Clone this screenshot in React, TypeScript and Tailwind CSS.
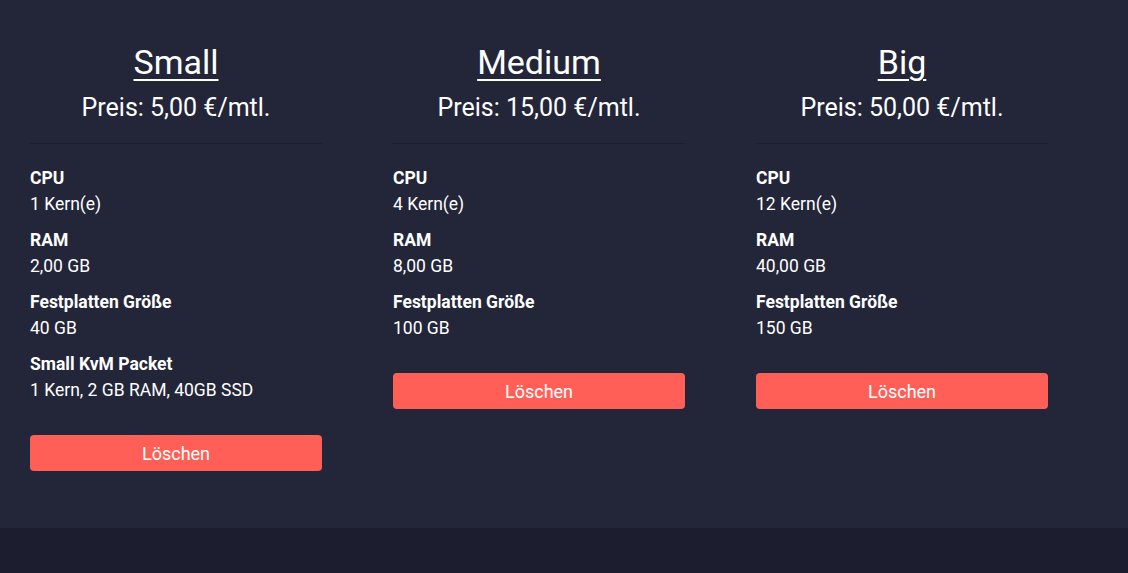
const plans = [
  {
    name: 'Small',
    price: '5,00',
    specs: [
      { label: 'CPU', value: '1 Kern(e)' },
      { label: 'RAM', value: '2,00 GB' },
      { label: 'Festplatten Größe', value: '40 GB' },
      { label: 'Small KvM Packet', value: '1 Kern, 2 GB RAM, 40GB SSD' },
    ],
  },
  {
    name: 'Medium',
    price: '15,00',
    specs: [
      { label: 'CPU', value: '4 Kern(e)' },
      { label: 'RAM', value: '8,00 GB' },
      { label: 'Festplatten Größe', value: '100 GB' },
    ],
  },
  {
    name: 'Big',
    price: '50,00',
    specs: [
      { label: 'CPU', value: '12 Kern(e)' },
      { label: 'RAM', value: '40,00 GB' },
      { label: 'Festplatten Größe', value: '150 GB' },
    ],
  },
]

export default function App() {
  return (
    <div className="min-h-[573px] bg-[#1c1d2e] text-white" style={{ fontFamily: 'Roboto, "Liberation Sans", sans-serif' }}>
      <div className="h-[528px] bg-[#232539] px-[30px] pt-[43px]">
        <div className="flex items-start gap-[71px]">
          {plans.map((plan) => (
            <div key={plan.name} className="w-[292px]">
              <h2 className="text-center text-[34px] leading-[38px] underline decoration-2 underline-offset-[5px]">{plan.name}</h2>
              <p className="mt-[12px] text-center text-[25px] leading-[30px]">Preis: {plan.price} €/mtl.</p>
              <div className="mt-[20px] h-px bg-[#1d1f31]" />
              <div className="mt-[21px] flex flex-col gap-[10px]">
                {plan.specs.map((s) => (
                  <div key={s.label} className="text-[17.5px] leading-[26px]">
                    <div className="font-bold">{s.label}</div>
                    <div>{s.value}</div>
                  </div>
                ))}
              </div>
              <button className="mt-[32px] h-[36px] w-full rounded bg-[#ff5f57] text-[18px] text-white">Löschen</button>
            </div>
          ))}
        </div>
      </div>
    </div>
  )
}
